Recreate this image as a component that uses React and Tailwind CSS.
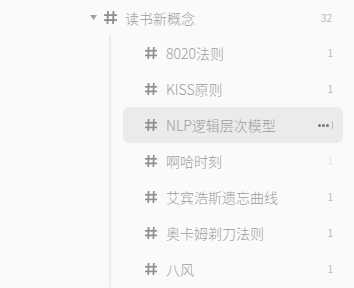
import React from "react";

const Hash = ({ className = "" }) => (
  <svg width="14" height="14" viewBox="0 0 14 14" className={className} fill="none" stroke="currentColor" strokeWidth="1.7" strokeLinecap="butt">
    <line x1="4.6" y1="1" x2="4.2" y2="13" />
    <line x1="9.8" y1="1" x2="9.4" y2="13" />
    <line x1="1" y1="4.8" x2="13" y2="4.8" />
    <line x1="1" y1="9.4" x2="13" y2="9.4" />
  </svg>
);

const items = [
  { name: "8020法则", count: "1" },
  { name: "KISS原则", count: "1" },
  { name: "NLP逻辑层次模型", count: "1", active: true },
  { name: "啊哈时刻", count: "1", faint: true },
  { name: "艾宾浩斯遗忘曲线", count: "1" },
  { name: "奥卡姆剃刀法则", count: "1" },
  { name: "八风", count: "1" },
];

export default function App() {
  return (
    <div
      className="w-[354px] h-[288px] bg-[#fafafa] overflow-hidden"
      style={{ fontFamily: '"Noto Sans CJK SC", "Noto Sans", sans-serif' }}
    >
      <div className="h-[35px] flex items-center pl-[90px] pr-[22px]">
        <svg width="7" height="5" viewBox="0 0 7 5" className="text-[#a0a0a0]">
          <polygon points="0,0 7,0 3.5,5" fill="currentColor" />
        </svg>
        <Hash className="ml-[6px] text-[#8f8f8f] w-[15px] h-[15px]" />
        <span className="ml-[7px] text-[14px] text-[#9c9c9c] leading-none font-light">读书新概念</span>
        <span className="ml-auto text-[10px] text-[#b8b8b8] leading-none">32</span>
      </div>
      <div className="ml-[109px] border-l-2 border-[#ececec] pl-[12px] pr-[11px]">
        {items.map((it) => (
          <div
            key={it.name}
            className={
              "h-[36px] flex items-center pl-[21px] pr-[10px] rounded-[6px] " +
              (it.active ? "bg-[#ebebeb]" : "")
            }
          >
            <Hash className="text-[#8f8f8f]" />
            <span className="ml-[8px] text-[14px] text-[#9c9c9c] leading-none font-light">{it.name}</span>
            {it.active ? (
              <span className="ml-auto flex items-center gap-[1px]">
                <span className="w-[3px] h-[3px] rounded-full bg-[#777]" />
                <span className="w-[3px] h-[3px] rounded-full bg-[#777]" />
                <span className="w-[3px] h-[3px] rounded-full bg-[#777]" />
                <span className="ml-[2px] w-[1px] h-[8px] bg-[#bdbdbd]" />
              </span>
            ) : (
              <span
                className={
                  "ml-auto text-[10px] leading-none " +
                  (it.faint ? "text-[#e6e6e6]" : "text-[#b8b8b8]")
                }
              >
                {it.count}
              </span>
            )}
          </div>
        ))}
      </div>
    </div>
  );
}
